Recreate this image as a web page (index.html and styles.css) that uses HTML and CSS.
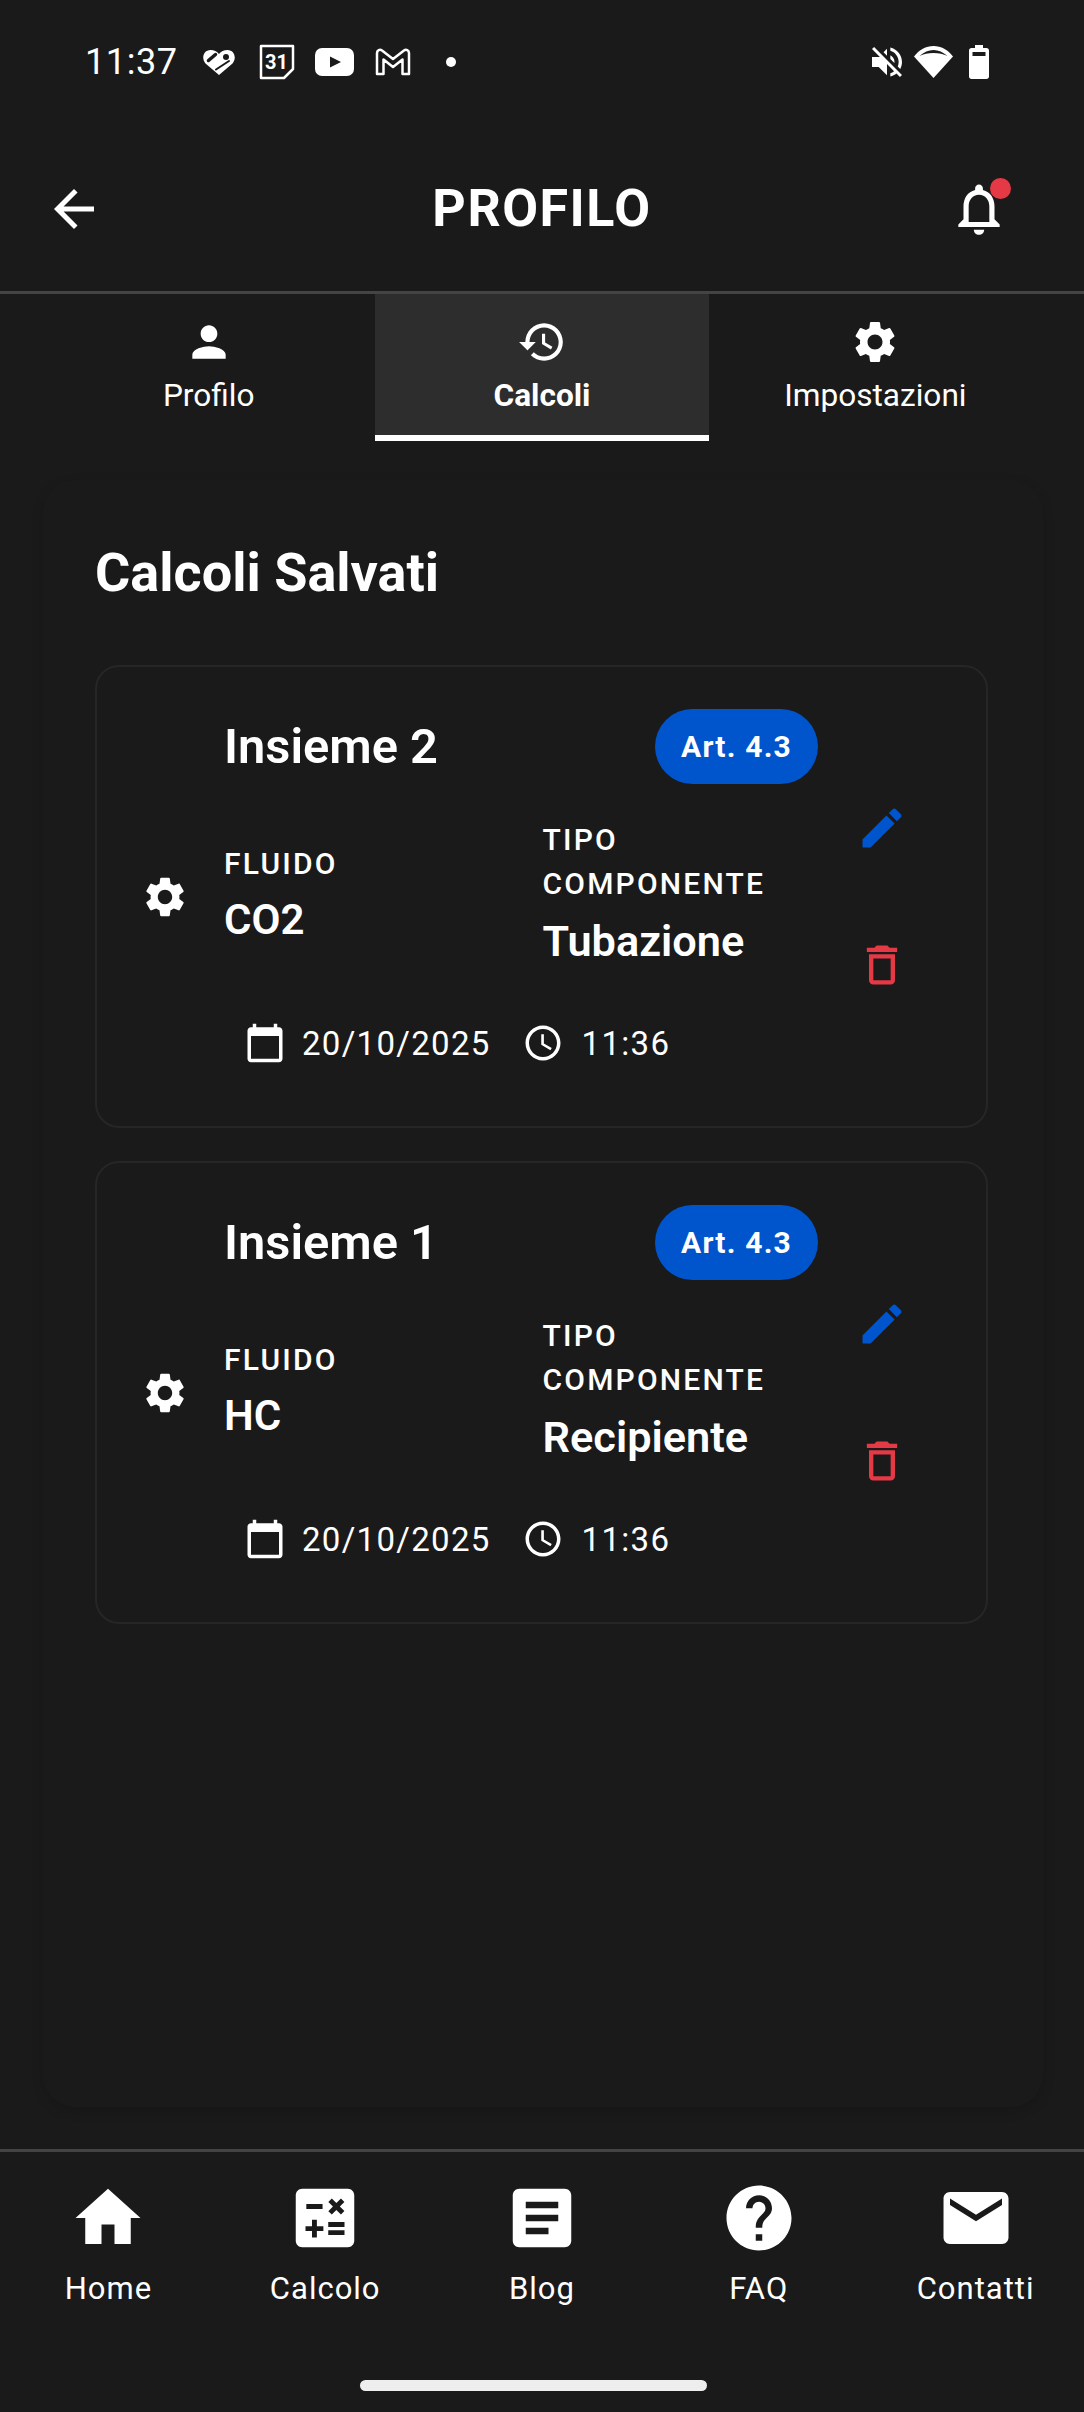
FILE: index.html
```html
<!DOCTYPE html>
<html lang="it">
<head>
  <meta charset="UTF-8">
  <title>Profilo</title>
  <link rel="stylesheet" href="styles.css">
</head>
<body>
  <svg class="icon-defs" xmlns="http://www.w3.org/2000/svg">
    <symbol id="i-gear" viewBox="0 0 24 24"><path d="M19.14 12.94c.04-.3.06-.61.06-.94 0-.32-.02-.64-.07-.94l2.03-1.58c.18-.14.23-.41.12-.61l-1.92-3.32c-.12-.22-.37-.29-.59-.22l-2.39.96c-.5-.38-1.03-.7-1.62-.94l-.36-2.54c-.04-.24-.24-.41-.48-.41h-3.84c-.24 0-.43.17-.47.41l-.36 2.54c-.59.24-1.13.57-1.62.94l-2.39-.96c-.22-.08-.47 0-.59.22L2.74 8.87c-.12.21-.08.47.12.61l2.03 1.58c-.05.3-.09.63-.09.94s.02.64.07.94l-2.03 1.58c-.18.14-.23.41-.12.61l1.92 3.32c.12.22.37.29.59.22l2.39-.96c.5.38 1.03.7 1.62.94l.36 2.54c.05.24.24.41.48.41h3.84c.24 0 .44-.17.47-.41l.36-2.54c.59-.24 1.13-.56 1.62-.94l2.39.96c.22.08.47 0 .59-.22l1.92-3.32c.12-.22.07-.47-.12-.61l-2.01-1.58zM12 15.6c-1.98 0-3.6-1.62-3.6-3.6s1.62-3.6 3.6-3.6 3.6 1.62 3.6 3.6-1.62 3.6-3.6 3.6z"/></symbol>
    <symbol id="i-edit" viewBox="0 0 24 24"><path d="M3 17.25V21h3.75L17.81 9.94l-3.75-3.75L3 17.25zM20.71 7.04c.39-.39.39-1.02 0-1.41l-2.34-2.34c-.39-.39-1.02-.39-1.41 0l-1.83 1.83 3.75 3.75 1.83-1.83z"/></symbol>
    <symbol id="i-trash" viewBox="0 0 24 24"><path d="M6 19c0 1.1.9 2 2 2h8c1.1 0 2-.9 2-2V7H6v12zM8 9h8v10H8V9zm7.5-5l-1-1h-5l-1 1H5v2h14V4h-3.5z"/></symbol>
    <symbol id="i-cal" viewBox="0 0 24 24"><path d="M20 3h-1V1h-2v2H7V1H5v2H4c-1.1 0-2 .9-2 2v16c0 1.1.9 2 2 2h16c1.1 0 2-.9 2-2V5c0-1.1-.9-2-2-2zm0 18H4V8h16v13z"/></symbol>
    <symbol id="i-clock" viewBox="0 0 24 24"><path d="M11.99 2C6.47 2 2 6.48 2 12s4.47 10 9.99 10C17.52 22 22 17.52 22 12S17.52 2 11.99 2zM12 20c-4.42 0-8-3.58-8-8s3.58-8 8-8 8 3.58 8 8-3.58 8-8 8zm.5-13H11v6l5.25 3.15.75-1.23-4.5-2.67z"/></symbol>
  </svg>

  <div class="app">
    <div class="status-bar">
      <span class="status-time">11:37</span>
      <svg class="st-heart" viewBox="0 0 34 27"><path d="M17 26 3.500 14.500C-1 9.500 1.500 1 8.500 1c3.500 0 6.500 1.500 8.500 4 2-2.500 5-4 8.500-4 7 0 9.500 8.500 5 13.500z" fill="#fff"/><path d="M6.500 11.500 13.500 5.500" stroke="#1a1a1a" stroke-width="3.500" stroke-linecap="round"/><path d="M14 20.500 27 12" stroke="#1a1a1a" stroke-width="2" stroke-linecap="round"/><circle cx="24" cy="8" r="3" fill="#1a1a1a"/></svg>
      <svg class="st-cal" viewBox="0 0 36 36"><path d="M2 2h32v23l-9 9H2z" fill="none" stroke="#fff" stroke-width="2.500" stroke-linejoin="round"/><text x="17.500" y="25" text-anchor="middle" class="st-cal-num">31</text></svg>
      <svg class="st-yt" viewBox="0 0 39 28"><rect width="39" height="28" rx="7" fill="#fff"/><path d="M15 8.500 26 14 15 19.500z" fill="#1a1a1a"/></svg>
      <svg class="st-gmail" viewBox="0 0 36 28"><path d="M2 26V5c0-3 3-4 5-2.500L18 11 29 2.500C31 1 34 2 34 5v21h-6.500V11.500L18 19 8.500 11.500V26z" fill="none" stroke="#fff" stroke-width="2.500" stroke-linejoin="round"/></svg>
      <span class="st-dot"></span>
      <div class="status-right">
        <svg class="st-mute" viewBox="0 0 24 24"><path fill="#fff" d="M16.500 12c0-1.770-1.020-3.290-2.500-4.030v2.210l2.450 2.450c.03-.2.050-.41.050-.63zm2.500 0c0 .94-.2 1.820-.54 2.640l1.510 1.510C20.630 14.910 21 13.500 21 12c0-4.280-2.990-7.860-7-8.770v2.060c2.890.86 5 3.540 5 6.710zM4.270 3 3 4.270 7.730 9H3v6h4l5 5v-6.730l4.250 4.250c-.67.520-1.420.93-2.250 1.180v2.060c1.380-.31 2.630-.95 3.690-1.810L19.730 21 21 19.730l-9-9L4.270 3zM12 4 9.910 6.090 12 8.180V4z"/></svg>
        <svg class="st-wifi" viewBox="0 0 39 32"><path d="M19.500 32 0 10.500C5 4 12 0 19.500 0S34 4 39 10.500z" fill="#fff"/><path d="M5.500 10C10 6 14.500 4 19.500 4s9.500 2 14 6c-4-1.800-8.500-2.900-14-2.900S9.500 8.200 5.500 10z" fill="#1a1a1a"/></svg>
        <svg class="st-batt" viewBox="0 0 20 34"><path d="M6 0h8v3h3.500c1.400 0 2.500 1.100 2.500 2.500V31.500c0 1.400-1.100 2.500-2.500 2.500H2.500C1.100 34 0 32.900 0 31.500V5.500C0 4.100 1.100 3 2.500 3H6z" fill="#fff"/><rect x="3.500" y="7" width="13" height="4" fill="#1a1a1a"/></svg>
      </div>
    </div>

    <header class="top-bar">
      <svg class="back-icon" viewBox="0 0 24 24"><path d="M20 11H7.830l5.590-5.590L12 4l-8 8 8 8 1.410-1.410L7.830 13H20v-2z"/></svg>
      <h1 class="page-title">PROFILO</h1>
      <div class="bell">
        <svg class="bell-icon" viewBox="0 0 24 24"><path d="M12 22c1.100 0 2-.9 2-2h-4c0 1.100.9 2 2 2zm6-6v-5c0-3.070-1.630-5.640-4.500-6.320V4c0-.83-.67-1.500-1.500-1.500s-1.500.67-1.500 1.500v.68C7.640 5.360 6 7.920 6 11v5l-2 2v1h16v-1l-2-2zm-2 1H8v-6c0-2.480 1.510-4.500 4-4.500s4 2.020 4 4.500v6z"/></svg>
        <span class="bell-dot"></span>
      </div>
    </header>

    <nav class="tabs">
      <div class="tab">
        <svg class="tab-icon" viewBox="0 0 24 24"><path d="M12 12c2.210 0 4-1.790 4-4s-1.790-4-4-4-4 1.790-4 4 1.790 4 4 4zm0 2c-2.670 0-8 1.340-8 4v2h16v-2c0-2.660-5.330-4-8-4z"/></svg>
        <span>Profilo</span>
      </div>
      <div class="tab active">
        <svg class="tab-icon" viewBox="0 0 24 24"><path d="M13 3c-4.970 0-9 4.030-9 9H1l3.890 3.890.07.14L9 12H6c0-3.870 3.130-7 7-7s7 3.130 7 7-3.130 7-7 7c-1.930 0-3.680-.79-4.940-2.060l-1.420 1.420C8.270 19.990 10.510 21 13 21c4.970 0 9-4.030 9-9s-4.030-9-9-9zm-1 5v5l4.280 2.540.72-1.210-3.500-2.080V8H12z"/></svg>
        <span>Calcoli</span>
      </div>
      <div class="tab">
        <svg class="tab-icon"><use href="#i-gear"/></svg>
        <span>Impostazioni</span>
      </div>
    </nav>

    <main class="content">
      <section class="panel">
        <h2 class="panel-title">Calcoli Salvati</h2>

        <article class="calc-card">
          <svg class="calc-gear"><use href="#i-gear"/></svg>
          <div class="calc-body">
            <div class="calc-head">
              <h3 class="calc-name">Insieme 2</h3>
              <span class="calc-badge">Art. 4.3</span>
            </div>
            <div class="calc-fields">
              <div class="field">
                <div class="field-label">FLUIDO</div>
                <div class="field-value">CO2</div>
              </div>
              <div class="field">
                <div class="field-label">TIPO<br>COMPONENTE</div>
                <div class="field-value big">Tubazione</div>
              </div>
            </div>
            <div class="calc-date">
              <svg class="date-icon"><use href="#i-cal"/></svg>
              <span>20/10/2025</span>
              <svg class="date-icon clock"><use href="#i-clock"/></svg>
              <span>11:36</span>
            </div>
          </div>
          <div class="calc-actions">
            <svg class="act-icon edit"><use href="#i-edit"/></svg>
            <svg class="act-icon trash"><use href="#i-trash"/></svg>
          </div>
        </article>

        <article class="calc-card">
          <svg class="calc-gear"><use href="#i-gear"/></svg>
          <div class="calc-body">
            <div class="calc-head">
              <h3 class="calc-name">Insieme 1</h3>
              <span class="calc-badge">Art. 4.3</span>
            </div>
            <div class="calc-fields">
              <div class="field">
                <div class="field-label">FLUIDO</div>
                <div class="field-value">HC</div>
              </div>
              <div class="field">
                <div class="field-label">TIPO<br>COMPONENTE</div>
                <div class="field-value big">Recipiente</div>
              </div>
            </div>
            <div class="calc-date">
              <svg class="date-icon"><use href="#i-cal"/></svg>
              <span>20/10/2025</span>
              <svg class="date-icon clock"><use href="#i-clock"/></svg>
              <span>11:36</span>
            </div>
          </div>
          <div class="calc-actions">
            <svg class="act-icon edit"><use href="#i-edit"/></svg>
            <svg class="act-icon trash"><use href="#i-trash"/></svg>
          </div>
        </article>
      </section>
    </main>

    <footer class="bottom-nav">
      <div class="nav-row">
        <div class="nav-item">
          <svg class="nav-icon" viewBox="0 0 24 24"><path d="M10 20v-6h4v6h5v-8h3L12 3 2 12h3v8z"/></svg>
          <span>Home</span>
        </div>
        <div class="nav-item">
          <svg class="nav-icon" viewBox="0 0 24 24"><path d="M19 3H5c-1.100 0-2 .9-2 2v14c0 1.100.9 2 2 2h14c1.100 0 2-.9 2-2V5c0-1.100-.9-2-2-2zm-5.970 4.060L14.090 6l1.410 1.410L16.910 6l1.060 1.060-1.410 1.410 1.410 1.410-1.060 1.060-1.410-1.400-1.410 1.410-1.060-1.060 1.410-1.410-1.410-1.420zm-6.780.66h5v1.500h-5v-1.500zM11.500 16h-2v2H8v-2H6v-1.500h2v-2h1.500v2h2V16zm6.500 1.250h-5v-1.500h5v1.500zm0-2.500h-5v-1.500h5v1.500z"/></svg>
          <span>Calcolo</span>
        </div>
        <div class="nav-item">
          <svg class="nav-icon" viewBox="0 0 24 24"><path d="M19 3H5c-1.100 0-2 .9-2 2v14c0 1.100.9 2 2 2h14c1.100 0 2-.9 2-2V5c0-1.100-.9-2-2-2zm-5 14H7v-2h7v2zm3-4H7v-2h10v2zm0-4H7V7h10v2z"/></svg>
          <span>Blog</span>
        </div>
        <div class="nav-item">
          <svg class="nav-icon" viewBox="0 0 24 24"><path d="M12 2C6.480 2 2 6.480 2 12s4.480 10 10 10 10-4.480 10-10S17.520 2 12 2zm1 17h-2v-2h2v2zm2.070-7.750l-.9.920C13.450 12.900 13 13.500 13 15h-2v-.5c0-1.100.45-2.100 1.170-2.830l1.240-1.260c.37-.36.59-.86.59-1.410 0-1.100-.9-2-2-2s-2 .9-2 2H8c0-2.210 1.790-4 4-4s4 1.790 4 4c0 .88-.36 1.680-.93 2.250z"/></svg>
          <span>FAQ</span>
        </div>
        <div class="nav-item">
          <svg class="nav-icon" viewBox="0 0 24 24"><path d="M20 4H4c-1.100 0-1.990.9-1.990 2L2 18c0 1.100.9 2 2 2h16c1.100 0 2-.9 2-2V6c0-1.100-.9-2-2-2zm0 4l-8 5-8-5V6l8 5 8-5v2z"/></svg>
          <span>Contatti</span>
        </div>
      </div>
      <div class="home-indicator"></div>
    </footer>
  </div>
</body>
</html>
```

FILE: styles.css
```css
* { box-sizing: border-box; }
html, body { margin: 0; padding: 0; }
body {
  background: #1a1a1a;
  color: #ffffff;
  font-family: Roboto, "Noto Sans", sans-serif;
}
svg { fill: currentColor; display: block; flex: none; }
.icon-defs { display: none; }

.app {
  display: flex;
  flex-direction: column;
  height: 2412px;
}

/* status bar */
.status-bar {
  display: flex;
  align-items: center;
  height: 124px;
  padding: 0 95px 0 85px;
}
.status-time { font-size: 36px; letter-spacing: .6px; margin-right: 24px; }
.st-heart { width: 34px; height: 27px; margin-right: 23px; }
.st-cal { width: 36px; height: 36px; margin-right: 20px; }
.st-cal-num { font-size: 20px; font-weight: 700; fill: #fff; }
.st-yt { width: 39px; height: 28px; margin-right: 21px; }
.st-gmail { width: 36px; height: 28px; margin-right: 35px; }
.st-dot { width: 10px; height: 10px; border-radius: 50%; background: #fff; }
.status-right { display: flex; align-items: center; margin-left: auto; }
.st-mute { width: 40px; height: 40px; margin-right: 7px; }
.st-wifi { width: 39px; height: 32px; margin-right: 16px; }
.st-batt { width: 20px; height: 34px; }

/* top bar */
.top-bar {
  display: grid;
  grid-template-columns: 1fr auto 1fr;
  align-items: center;
  height: 170px;
  padding-top: 2px;
  border-bottom: 3px solid #444444;
}
.back-icon { width: 60px; height: 60px; margin-left: 44px; }
.page-title { margin: 0; font-size: 52px; font-weight: 700; letter-spacing: 1.5px; }
.bell { position: relative; justify-self: end; margin-right: 74px; }
.bell-icon { width: 62px; height: 62px; }
.bell-dot {
  position: absolute;
  top: 0;
  right: -1px;
  width: 21px;
  height: 21px;
  border-radius: 50%;
  background: #e63946;
}

/* tabs */
.tabs { display: flex; padding: 0 42px; }
.tab {
  flex: 1;
  display: flex;
  flex-direction: column;
  align-items: center;
  gap: 11px;
  height: 147px;
  padding-top: 23px;
  font-size: 31.6px;
  line-height: 36px;
  border-bottom: 6px solid transparent;
}
.tab-icon { width: 50px; height: 50px; }
.tab.active {
  background: #2d2d2d;
  border-bottom-color: #ffffff;
  font-weight: 700;
}

/* main */
.content { flex: 1; padding: 39px 41px 42px 43px; }
.panel {
  height: 100%;
  padding: 63px 55px 0 52px;
  border-radius: 32px;
  background: #1a1a1a;
  box-shadow: 0 4px 12px rgba(0, 0, 0, .15);
}
.panel-title { margin: 0 0 62px; font-size: 54px; line-height: 60px; font-weight: 700; }

.calc-card {
  display: flex;
  align-items: center;
  margin-bottom: 33px;
  padding: 42px 0 42px 44px;
  border: 2px solid #262626;
  border-radius: 24px;
}
.calc-gear { width: 48px; height: 48px; margin-right: 35px; }
.calc-body { width: 594px; margin-right: 34px; }
.calc-head { display: flex; justify-content: space-between; align-items: center; }
.calc-name { margin: 0; font-size: 48.8px; font-weight: 600; }
.calc-badge {
  display: flex;
  align-items: center;
  justify-content: center;
  width: 163px;
  height: 75px;
  border-radius: 38px;
  background: #0055cc;
  font-size: 30px;
  font-weight: 700;
  letter-spacing: 1.2px;
}
.calc-fields { display: flex; align-items: center; margin-top: 34px; }
.field { flex: 1; }
.field:first-child { flex: none; width: 318.5px; }
.field-label { font-size: 30px; line-height: 44px; font-weight: 500; letter-spacing: 2.2px; }
.field-value { font-size: 42px; line-height: 50px; font-weight: 600; margin-top: 9px; }
.field-value.big { font-size: 43.3px; line-height: 52px; margin-top: 10px; }

.calc-date {
  display: flex;
  align-items: center;
  margin: 54px 0 20px 20px;
  font-size: 33px;
  letter-spacing: 1.3px;
}
.date-icon { width: 42px; height: 42px; margin-right: 16px; }
.date-icon.clock { margin-left: 31px; margin-right: 18px; }

.calc-actions { display: flex; flex-direction: column; gap: 85px; width: 60px; align-items: center; }
.act-icon { width: 52px; height: 52px; }
.edit { color: #0055cc; }
.trash { color: #e63946; }

/* bottom nav */
.bottom-nav {
  display: flex;
  flex-direction: column;
  height: 263px;
  border-top: 3px solid #444444;
}
.nav-row { display: flex; padding-top: 27px; }
.nav-item {
  flex: 1;
  display: flex;
  flex-direction: column;
  align-items: center;
  gap: 14px;
  font-size: 31px;
  line-height: 36px;
  letter-spacing: 1px;
}
.nav-icon { width: 78px; height: 78px; }
.home-indicator {
  width: 347px;
  height: 11px;
  margin: auto 0 21px 360px;
  border-radius: 6px;
  background: #eeeeee;
}
```
